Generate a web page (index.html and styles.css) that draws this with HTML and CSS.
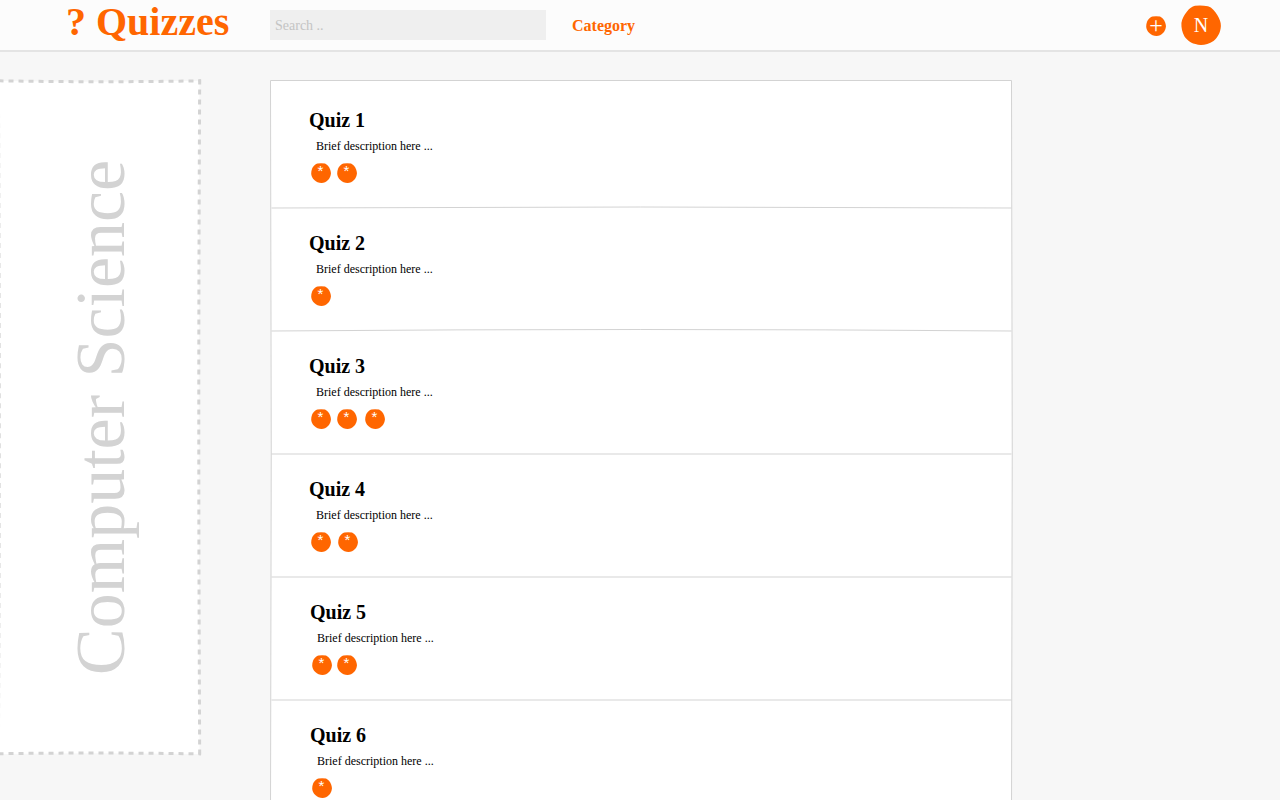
FILE: index.html
```html
<!DOCTYPE html>
<html lang="en">
<head>
<meta charset="utf-8">
<title>Quizzes</title>
<link rel="stylesheet" href="styles.css">
</head>
<body>
<svg class="defs" aria-hidden="true">
  <symbol id="blob" viewBox="0 0 40 40"><path d="M14 .8Q20 0 27 1.2C31 2.500 34 6 36.300 10C38.500 14 40 17 39.900 21C39.500 28 36.500 32.500 32.500 36C28.500 39 24 39.900 20 39.900C12 39.500 7 36.500 3.500 31.500C1.200 27 .2 23 .4 18C1.200 13.500 3 10.500 6 6.500C8.500 3.500 11 1.200 14 .8Z"/></symbol>
  <symbol id="blob-small" viewBox="0 0 20 20"><path d="M6.500 .6Q10 -.2 14 .6C17 2 19.900 6 19.900 10.500C19.700 15.500 15.500 19.900 10.500 19.900C5 19.900 .3 15.500 .2 10.500C.2 6 2.500 1.800 6.500 .6Z"/></symbol>
</svg>
<header class="topbar">
  <div class="logo">? Quizzes</div>
  <div class="search">Search ..</div>
  <nav class="category">Category</nav>
  <div class="badge add"><svg><use href="#blob-small"/></svg><span>+</span></div>
  <div class="badge avatar"><svg><use href="#blob"/></svg><span>N</span></div>
</header>
<main class="page">
  <aside class="subject">
    <svg class="outline" viewBox="0 0 210 690">
      <path class="paper" d="M0 9Q100 10.500 199.500 8.800Q198 345 199.500 682Q100 680.500 0 682Z"/>
      <path class="dash" d="M-1.500 8.800Q100 10.600 201 8.800"/>
      <path class="dash" d="M199.700 7.500Q197.900 345 199.700 683.500"/>
      <path class="dash" d="M-1.500 681.700Q100 680.300 201 681.900"/>
      <path class="dash" d="M-1.600 11.300Q0 345 -1.600 683.500"/>
    </svg>
    <span class="subject-name">Computer Science</span>
  </aside>
  <section class="quizzes">
    <svg class="frame" viewBox="0 0 744 740">
      <path class="paper" d="M.5 .5H741.500Q743 370 741.500 739H.5Q2 370 .5 .5Z"/>
      <path d="M.5 740Q2 370 .5 .5H741.500Q743 370 741.500 740"/>
      <path d="M1.500 128Q370 126 741.500 128M1.500 251Q370 248 741.500 251"/>
      <path d="M1.500 374H741.500M1.500 497H741.500M1.500 620H741.500"/>
    </svg>
    <article class="quiz"><h2>Quiz 1</h2><p>Brief description here ...</p>
      <div class="stars"><i class="badge star"><svg><use href="#blob-small"/></svg><span>*</span></i><i class="badge star"><svg><use href="#blob-small"/></svg><span>*</span></i></div></article>
    <article class="quiz"><h2>Quiz 2</h2><p>Brief description here ...</p>
      <div class="stars"><i class="badge star"><svg><use href="#blob-small"/></svg><span>*</span></i></div></article>
    <article class="quiz"><h2>Quiz 3</h2><p>Brief description here ...</p>
      <div class="stars"><i class="badge star"><svg><use href="#blob-small"/></svg><span>*</span></i><i class="badge star"><svg><use href="#blob-small"/></svg><span>*</span></i><i class="badge star spaced-2"><svg><use href="#blob-small"/></svg><span>*</span></i></div></article>
    <article class="quiz"><h2>Quiz 4</h2><p>Brief description here ...</p>
      <div class="stars"><i class="badge star"><svg><use href="#blob-small"/></svg><span>*</span></i><i class="badge star spaced-1"><svg><use href="#blob-small"/></svg><span>*</span></i></div></article>
    <article class="quiz nudged"><h2>Quiz 5</h2><p>Brief description here ...</p>
      <div class="stars tight"><i class="badge star"><svg><use href="#blob-small"/></svg><span>*</span></i><i class="badge star"><svg><use href="#blob-small"/></svg><span>*</span></i></div></article>
    <article class="quiz nudged"><h2>Quiz 6</h2><p>Brief description here ...</p>
      <div class="stars"><i class="badge star"><svg><use href="#blob-small"/></svg><span>*</span></i></div></article>
  </section>
</main>
</body>
</html>
```
FILE: styles.css
```css
* { box-sizing: border-box; }
body {
  margin: 0;
  height: 800px;
  overflow: hidden;
  background: #f7f7f7;
  color: #000;
  font-family: "Liberation Serif", serif;
}
.defs { display: none; }

.topbar {
  display: flex;
  align-items: center;
  height: 52px;
  padding: 0 59px 0 66px;
  background: #fcfcfc;
  border-bottom: 2px solid #e4e4e4;
}
.logo {
  width: 204px;
  height: 46px;
  margin-top: -6px;
  font-size: 40px;
  line-height: 46px;
  font-weight: bold;
  color: #f60;
}
.search {
  width: 276px;
  height: 30px;
  padding: 1px 0 0 5px;
  background: #efefef;
  color: #c4c4c4;
  font-size: 14px;
  line-height: 30px;
}
.category {
  margin: 2px 0 0 26px;
  color: #f60;
  font-size: 16px;
  line-height: 20px;
  font-weight: bold;
}

.badge {
  display: grid;
  flex: none;
  justify-items: center;
  color: #fff;
  font-style: normal;
}
.badge svg, .badge span { grid-area: 1 / 1; }
.badge svg { width: 100%; height: 100%; fill: #f60; }
.add {
  width: 20px;
  height: 20px;
  margin: 2px 15px 0 auto;
  font-size: 24px;
  line-height: 19px;
}
.avatar {
  width: 40px;
  height: 40px;
  font-size: 20px;
  line-height: 40px;
}

.page {
  display: grid;
  grid-template-columns: 210px 744px;
  column-gap: 60px;
  height: 748px;
}
.subject {
  position: relative;
  display: flex;
  align-items: center;
  justify-content: center;
  height: 690px;
  margin-top: 20px;
  padding-right: 8px;
}
.outline {
  position: absolute;
  inset: 0;
  width: 210px;
  height: 690px;
}
.paper { fill: #fff; stroke: none; }
.dash {
  fill: none;
  stroke: #d3d3d3;
  stroke-width: 3;
  stroke-dasharray: 5 5;
}
.subject-name {
  position: relative;
  height: 515px;
  writing-mode: vertical-rl;
  transform: rotate(180deg);
  white-space: nowrap;
  font-size: 70px;
  line-height: 80px;
  color: #d3d3d3;
}

.quizzes {
  position: relative;
  height: 720px;
  margin-top: 28px;
  padding: 5px 0 0 39px;
}
.frame {
  position: absolute;
  top: 0;
  left: 0;
  width: 744px;
  height: 740px;
  fill: none;
  stroke: #d3d3d3;
  stroke-width: 1;
}
.quiz {
  position: relative;
  height: 123px;
  padding-top: 24px;
}
.nudged { padding-left: 1px; }
.quiz h2 {
  margin: 0;
  font-size: 20px;
  line-height: 22px;
}
.quiz p {
  margin: 8px 0 0 7px;
  font-size: 12px;
  line-height: 14px;
}
.stars {
  display: flex;
  gap: 6px;
  margin: 10px 0 0 2px;
}
.tight { gap: 5px; }
.star {
  width: 20px;
  height: 20px;
  font: 15px/16px "Liberation Sans", sans-serif;
}
.star span { margin-right: 1px; }
.spaced-1 { margin-left: 1px; }
.spaced-2 { margin-left: 2px; }
```
